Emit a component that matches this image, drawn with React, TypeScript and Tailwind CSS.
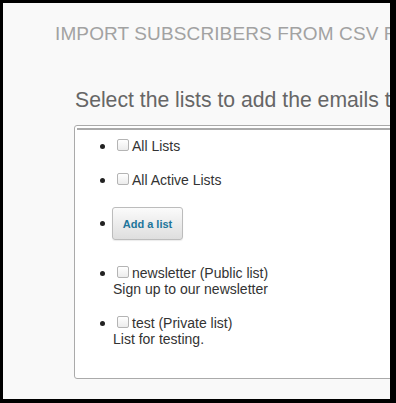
const font = { fontFamily: '"Liberation Sans", Arial, sans-serif' };

type ListItem = { id: string; label: string; description?: string };

const lists: ListItem[] = [
  { id: "newsletter", label: "newsletter (Public list)", description: "Sign up to our newsletter" },
  { id: "test", label: "test (Private list)", description: "List for testing." },
];

function Bullet({ top }: { top: string }) {
  return (
    <span className={`flex w-[38px] shrink-0 justify-end pr-[8px] ${top}`}>
      <span className="h-[5px] w-[5px] rounded-full bg-[#222]" />
    </span>
  );
}

function CheckRow({ label }: { label: string }) {
  return (
    <label className="flex h-[16px] items-center whitespace-nowrap">
      <input
        type="checkbox"
        className="mb-[3px] ml-[4px] mr-[3px] h-[12px] w-[12px] appearance-none rounded-[2px] border border-[#b4b4b4] bg-linear-to-b from-white to-[#ececec]"
      />
      <span>{label}</span>
    </label>
  );
}

export default function App() {
  return (
    <div className="h-[403px] w-[396px] bg-black pb-[4px] pl-[3px] pr-[6px] pt-[3px]" style={font}>
      <div className="h-full overflow-hidden bg-[#f9f9f9]">
        <h2 className="whitespace-nowrap pl-[52px] pt-[21px] text-[19px] leading-[20px] tracking-[0.12px] text-[#a2a2a2]">
          IMPORT SUBSCRIBERS FROM CSV FILE
        </h2>

        <p className="mt-[43px] whitespace-nowrap pl-[72px] text-[21.2px] leading-[26px] text-[#666]">
          Select the lists to add the emails to
        </p>

        <div className="ml-[71px] mt-[12px] w-[420px] rounded-[3px] border border-[#aaa] bg-white pb-[31px]">
          <div className="ml-[2px] mt-[2px] border-t-2 border-[#aaa]" />

          <ul className="mt-[8px] text-[14px] leading-[16px] text-[#333]">
            <li className="mb-[18px] flex">
              <Bullet top="pt-[6px]" />
              <CheckRow label="All Lists" />
            </li>
            <li className="mb-[19px] flex">
              <Bullet top="pt-[6px]" />
              <CheckRow label="All Active Lists" />
            </li>
            <li className="mb-[25px] flex">
              <Bullet top="pt-[14px]" />
              <button className="-ml-[1px] h-[33px] w-[71px] rounded-[3px] border border-[#bcbcbc] bg-linear-to-b from-[#fbfbfb] to-[#dedede] text-[11px] font-bold text-[#21759b] shadow-[0_1px_1px_rgba(0,0,0,0.08)]">
                Add a list
              </button>
            </li>
            {lists.map((list) => (
              <li key={list.id} className="mb-[18px] flex last:mb-0">
                <Bullet top="pt-[6px]" />
                <div>
                  <CheckRow label={list.label} />
                  <div className="whitespace-nowrap">{list.description}</div>
                </div>
              </li>
            ))}
          </ul>
        </div>
      </div>
    </div>
  );
}
